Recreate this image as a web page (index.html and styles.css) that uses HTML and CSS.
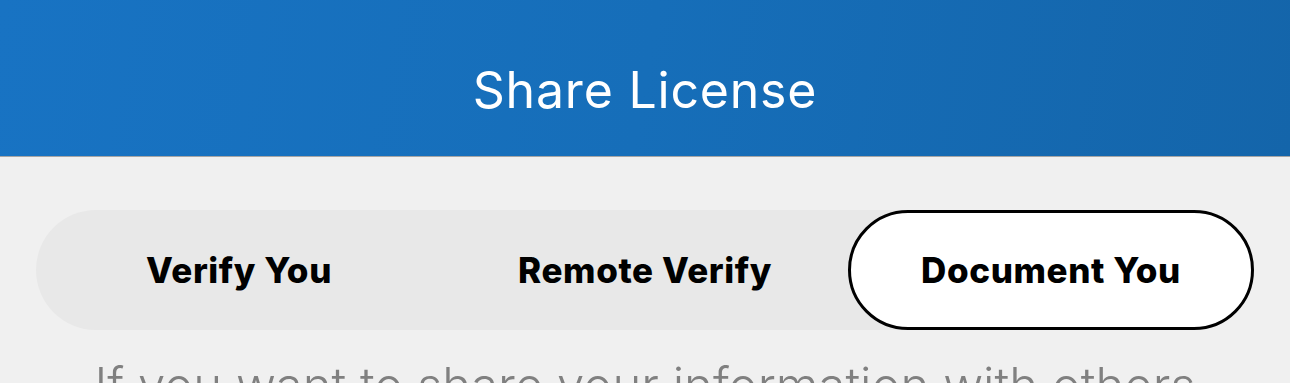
FILE: index.html
```html
<!DOCTYPE html>
<html lang="en">

<head>
    <meta charset="UTF-8" />
    <meta name="viewport" content="width=device-width, initial-scale=1.0" />
    <title>Share License</title>
    <link rel="stylesheet" href="styles.css">
</head>

<body>
    <div class="header">
        <h1>Share License</h1>
    </div>
    <div class="content">
        <div class="tabs">
            <div class="tab">Verify You</div>
            <div class="tab">Remote Verify</div>
            <div class="tab active">Document You</div>
        </div>
        <p class="intro">If you want to share your information with others</p>
    </div>
</body>

</html>
```

FILE: styles.css
```css
body {
    margin: 0;
    background-color: #f0f0f0;
    font-family: "Inter", "Liberation Sans", sans-serif;
    overflow: hidden;
}

.header {
    height: 156px;
    background: linear-gradient(100deg, #1873c3 0%, #166eb9 50%, #1465aa 100%);
    border-bottom: 1px solid #a5a5a5;
    display: flex;
    align-items: center;
    justify-content: center;
}

.header h1 {
    margin: 0;
    padding-top: 24px;
    color: #fff;
    font-size: 50px;
    font-weight: 400;
    letter-spacing: 0.8px;
}

.content {
    padding: 53px 36px 0;
}

.tabs {
    display: grid;
    grid-template-columns: repeat(3, 1fr);
    height: 120px;
    background-color: #e8e8e8;
    border-radius: 60px;
}

.tab {
    box-sizing: border-box;
    display: flex;
    align-items: center;
    justify-content: center;
    font-size: 35px;
    font-weight: 800;
    color: #000;
    border-radius: 60px;
    letter-spacing: 0.6px;
}

.tab.active {
    background-color: #fff;
    border: 3px solid #000;
}

.intro {
    margin: 26px 0 0;
    text-align: center;
    color: #808080;
    font-size: 49px;
    font-weight: 300;
    white-space: nowrap;
}
```
